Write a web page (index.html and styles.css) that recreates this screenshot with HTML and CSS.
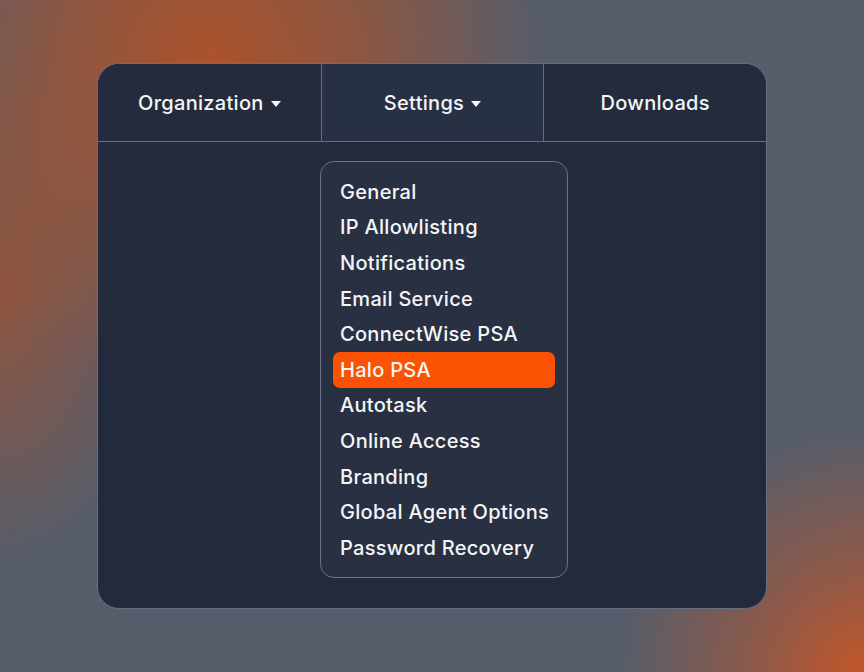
FILE: index.html
```html
<!DOCTYPE html>
<html lang="en">
  <head>
    <meta charset="UTF-8" />
    <meta name="viewport" content="width=device-width, initial-scale=1.0" />
    <title>Settings menu</title>
    <link rel="stylesheet" href="styles.css">
  </head>
  <body>
    <div class="panel">
      <nav class="tabs">
        <div class="tab">Organization <span class="caret"></span></div>
        <div class="tab tab-active">Settings <span class="caret"></span></div>
        <div class="tab">Downloads</div>
      </nav>
      <div class="panel-body">
        <ul class="menu">
          <li class="menu-item">General</li>
          <li class="menu-item">IP Allowlisting</li>
          <li class="menu-item">Notifications</li>
          <li class="menu-item">Email Service</li>
          <li class="menu-item">ConnectWise PSA</li>
          <li class="menu-item selected">Halo PSA</li>
          <li class="menu-item">Autotask</li>
          <li class="menu-item">Online Access</li>
          <li class="menu-item">Branding</li>
          <li class="menu-item">Global Agent Options</li>
          <li class="menu-item">Password Recovery</li>
        </ul>
      </div>
    </div>
  </body>
</html>
```

FILE: styles.css
```css
html,
body {
  height: 100%;
}
body {
  margin: 0;
  font-family: Inter, "Noto Sans", Arial, sans-serif;
  color: #f4f5f7;
  background-color: #575d6a;
  background-image:
    radial-gradient(circle at 210px 60px, rgba(176, 82, 40, 0.95) 0, rgba(176, 82, 40, 0.6) 150px, rgba(176, 82, 40, 0) 330px),
    radial-gradient(circle at 870px 680px, rgba(200, 86, 38, 1) 0, rgba(200, 86, 38, 0.5) 110px, rgba(200, 86, 38, 0) 250px),
    radial-gradient(ellipse 160px 260px at 0 300px, rgba(160, 82, 50, 0.75) 0, rgba(160, 82, 50, 0) 100%);
  padding-top: 63px;
  box-sizing: border-box;
}
.panel {
  width: 670px;
  margin: 0 0 0 97px;
  background-color: #232a3b;
  border: 1.5px solid #666f82;
  border-radius: 22px;
  overflow: hidden;
  box-sizing: border-box;
}
.tabs {
  display: grid;
  grid-template-columns: 1fr 1fr 1fr;
  border-bottom: 1.5px solid #666f82;
}
.tab {
  height: 77px;
  display: flex;
  align-items: center;
  justify-content: center;
  gap: 7px;
  font-size: 20px;
  font-weight: 500;
  letter-spacing: 0.3px;
  background-color: #242b3c;
}
.tab + .tab {
  border-left: 1.5px solid #666f82;
}
.tab-active {
  background-color: #283043;
}
.caret {
  width: 0;
  height: 0;
  border-left: 5px solid transparent;
  border-right: 5px solid transparent;
  border-top: 6px solid #f4f5f7;
  margin-top: 2px;
}
/* dropdown under settings */
.panel-body {
  display: grid;
  grid-template-columns: 222px 1fr;
  padding: 19px 0 30px;
}
.menu {
  grid-column: 2;
  width: 248px;
  margin: 0;
  padding: 12px 12px 11px;
  list-style: none;
  background-color: #283042;
  border: 1.5px solid #69728a;
  border-radius: 14px;
  box-sizing: border-box;
}
.menu-item {
  height: 35.6px;
  display: flex;
  align-items: center;
  padding-left: 7px;
  font-size: 20px;
  font-weight: 500;
  letter-spacing: 0.3px;
  border-radius: 7px;
}
.selected {
  background-color: #fb5303;
}
```
